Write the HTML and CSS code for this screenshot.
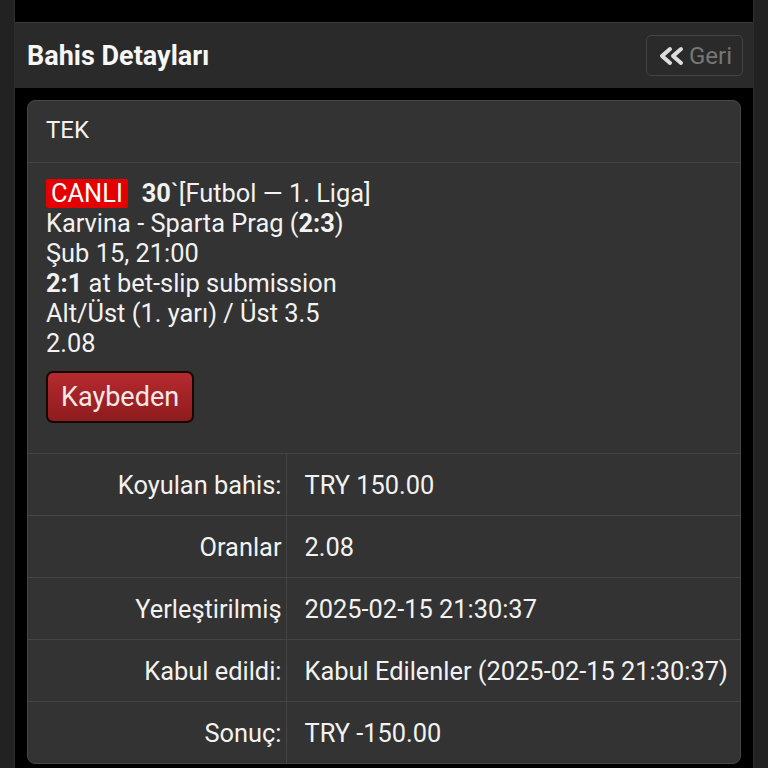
FILE: index.html
```html
<!DOCTYPE html>
<html lang="tr">
<head>
    <meta charset="UTF-8">
    <meta name="viewport" content="width=device-width, initial-scale=1.0">
    <title>Bahis Detayları</title>
    <link rel="stylesheet" href="styles.css">
</head>
<body>
    <div class="page">
        <div class="topbar">
            <h1>Bahis Detayları</h1>
            <button class="back">
                <svg width="28" height="22" viewBox="0 0 28 22">
                    <path d="M13 4 L5 11 L13 18" />
                    <path d="M24 4 L16 11 L24 18" />
                </svg>
                <span>Geri</span>
            </button>
        </div>

        <div class="content">
            <div class="card">
                <div class="card-head">TEK</div>

                <div class="bet">
                    <div><span class="live">CANLI</span><b>30</b>`[Futbol — 1. Liga]</div>
                    <div>Karvina - Sparta Prag (<b>2:3</b>)</div>
                    <div>Şub 15, 21:00</div>
                    <div><b>2:1</b> at bet-slip submission</div>
                    <div>Alt/Üst (1. yarı) / Üst 3.5</div>
                    <div>2.08</div>
                    <span class="status lost">Kaybeden</span>
                </div>

                <table class="details">
                    <colgroup>
                        <col class="label-col">
                        <col>
                    </colgroup>
                    <tr>
                        <td class="label">Koyulan bahis:</td>
                        <td>TRY 150.00</td>
                    </tr>
                    <tr>
                        <td class="label">Oranlar</td>
                        <td>2.08</td>
                    </tr>
                    <tr>
                        <td class="label">Yerleştirilmiş</td>
                        <td>2025-02-15 21:30:37</td>
                    </tr>
                    <tr>
                        <td class="label">Kabul edildi:</td>
                        <td>Kabul Edilenler (2025-02-15 21:30:37)</td>
                    </tr>
                    <tr>
                        <td class="label">Sonuç:</td>
                        <td>TRY -150.00</td>
                    </tr>
                </table>
            </div>
        </div>
    </div>
</body>
</html>
```

FILE: styles.css
```css
body {
    margin: 0;
    background: #222;
    font-family: Roboto, "Noto Sans", sans-serif;
    color: #f2f2f2;
}
.page {
    margin: 0 14px;
    min-height: 768px;
    background: #000;
    padding-top: 22px;
    border-left: 1px solid #2c2c2c;
    border-right: 1px solid #2c2c2c;
}
.topbar {
    height: 66px;
    background: #2a2a2a;
    border-top: 1px solid #3a3a3a;
    box-sizing: border-box;
    display: flex;
    align-items: center;
    justify-content: space-between;
    padding: 0 10px 0 12px;
}
.topbar h1 {
    margin: 0;
    font-size: 27px;
    font-weight: bold;
    color: #f6f6f6;
}
.back {
    display: flex;
    align-items: center;
    gap: 4px;
    height: 41px;
    width: 97px;
    padding: 0 8px 0 10px;
    background: #2a2a2a;
    border: 1px solid #444;
    border-radius: 5px;
    color: #777;
    font-family: inherit;
    font-size: 24px;
    box-sizing: border-box;
}
.back svg path {
    fill: none;
    stroke: #ddd;
    stroke-width: 4;
    stroke-linecap: round;
    stroke-linejoin: round;
}
.content {
    padding: 12px 12px;
}
.card {
    background: #333;
    border: 1px solid #474747;
    border-radius: 8px;
    overflow: hidden;
}
.card-head {
    height: 61px;
    line-height: 58px;
    padding: 0 18px;
    font-size: 24px;
    border-bottom: 1px solid #444;
}
.bet {
    padding: 15px 18px 30px;
    font-size: 25.4px;
    line-height: 30px;
}
.live {
    display: inline-block;
    background: #e40000;
    color: #fff;
    line-height: 29px;
    padding: 0 5px;
    margin-right: 14px;
    border-radius: 2px;
}
.status {
    display: inline-block;
    margin-top: 13px;
    padding: 0 13px;
    height: 48px;
    line-height: 48px;
    font-size: 27px;
    border-radius: 7px;
}
.status.lost {
    background: linear-gradient(#b52a2f, #8e1b1e);
    border: 2px solid #160606;
    color: #f6e8e8;
}
.details {
    width: 100%;
    table-layout: fixed;
    border-collapse: collapse;
    font-size: 25.4px;
}
.details .label-col {
    width: 258px;
}
.details td {
    height: 61px;
    padding: 0 0 0 18px;
    border-top: 1px solid #444;
    white-space: nowrap;
}
.details td.label {
    text-align: right;
    padding: 0 4px 0 0;
    border-right: 1px solid #444;
}
```
